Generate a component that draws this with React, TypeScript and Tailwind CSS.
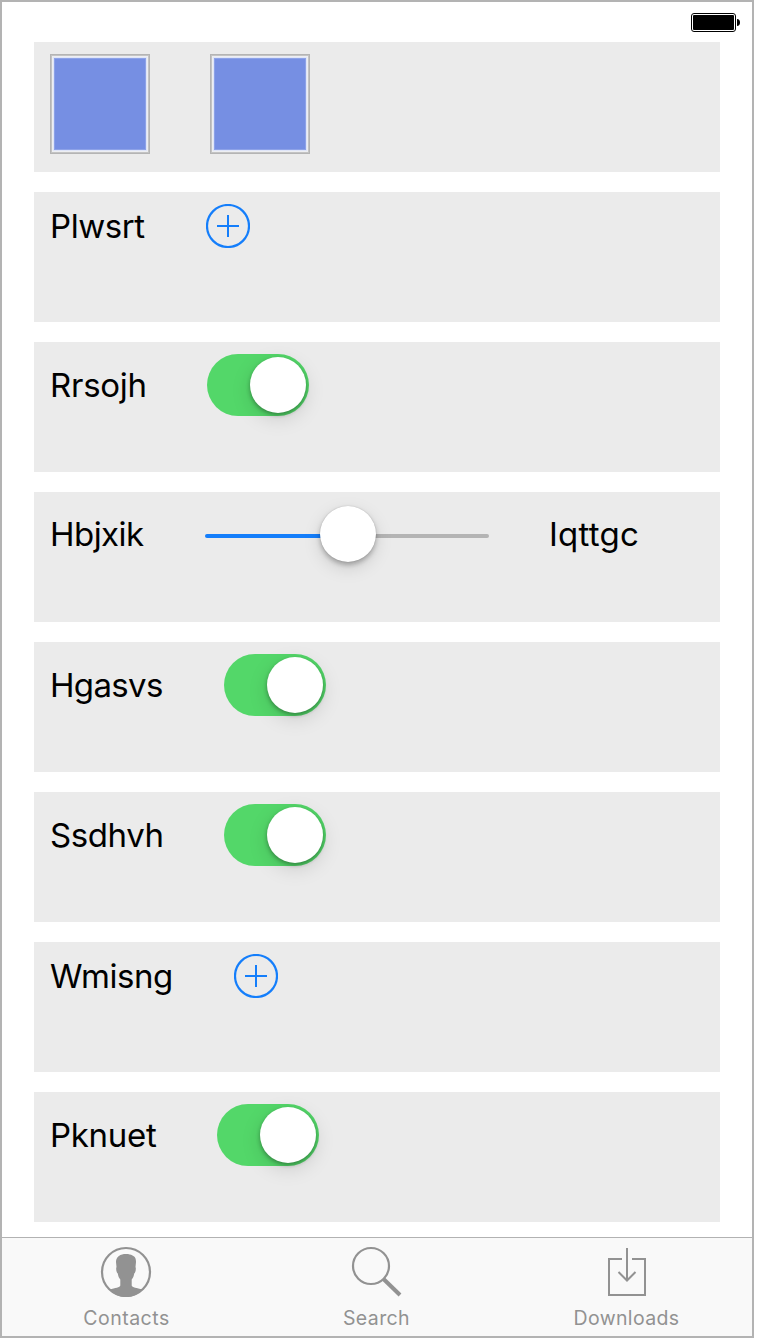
import type { ReactNode } from "react";

function Row({ children }: { children?: ReactNode }) {
  return (
    <div className="flex h-[130px] items-start bg-[#ebebeb] pt-3 pl-4">
      <div className="flex items-center gap-[60px]">{children}</div>
    </div>
  );
}

function Label({ text, className }: { text: string; className: string }) {
  return (
    <span className={`block whitespace-nowrap text-[33px] leading-[44px] text-black ${className}`}>
      {text}
    </span>
  );
}

function Swatch() {
  return (
    <div className="size-[100px] border border-[#b4b4b4] bg-[#768fe3] shadow-[inset_0_0_0_1px_#c3c3c3,inset_0_0_0_2px_#edeef1,inset_0_0_0_3px_#dfe5f8,inset_0_0_0_4px_#8da2e8]" />
  );
}

function AddButton() {
  return (
    <button type="button" className="block size-11">
      <svg viewBox="0 0 44 44" className="size-11" fill="none" stroke="#147efb" strokeWidth="2">
        <circle cx="22" cy="22" r="21" strokeWidth="2.2" />
        <path d="M22 11v22M11 22h22" />
      </svg>
    </button>
  );
}

function Toggle() {
  return (
    <button
      type="button"
      role="switch"
      aria-checked="true"
      className="flex h-[62px] w-[102px] items-center justify-end rounded-full bg-[#53d769] pr-[3px]"
    >
      <span className="block size-14 rounded-full bg-white shadow-[0_6px_20px_rgba(0,0,0,0.13),0_2px_4px_rgba(0,0,0,0.32)]" />
    </button>
  );
}

function Slider() {
  return (
    <div className="relative flex h-[60px] w-[284px] items-center pt-1">
      <div className="h-1 flex-1 rounded-l-full bg-[#147efb]" />
      <div className="h-1 flex-1 rounded-r-full bg-[#b4b4b4]" />
      <div className="absolute top-[2px] left-[115px] size-14 rounded-full bg-white shadow-[0_6px_18px_rgba(0,0,0,0.13),0_3px_5px_rgba(0,0,0,0.26),0_0_1px_rgba(0,0,0,0.25)]" />
    </div>
  );
}

function Tab({ label, className, children }: { label: string; className: string; children?: ReactNode }) {
  return (
    <button type="button" className="flex w-[250px] flex-col items-center pt-[9px] text-[#929292]">
      {children}
      <span className={`mt-[9px] block pr-px text-[19.5px] leading-6 ${className}`}>{label}</span>
    </button>
  );
}

export default function App() {
  return (
    <div className="h-[1340px] w-[760px] bg-white font-['Inter',sans-serif]">
      <div className="flex h-[1338px] w-[754px] flex-col border-2 border-[#b3b3b3] bg-white">
        <div className="flex h-10 shrink-0 justify-end pt-[11px] pr-3">
          <svg viewBox="0 0 49 19" className="h-[19px] w-[49px]">
            <rect x="0.5" y="0.5" width="44" height="18" rx="2.5" fill="none" stroke="#000" />
            <rect x="2" y="2" width="41" height="15" rx="1" fill="#000" />
            <path d="M46 6c2 0 3 1.500 3 3.500s-1 3.500-3 3.500z" fill="#000" />
          </svg>
        </div>
        <main className="flex flex-1 flex-col gap-5 px-8">
          <Row>
            <Swatch />
            <Swatch />
          </Row>
          <Row>
            <Label text="Plwsrt" className="w-24 tracking-[-0.45px]" />
            <AddButton />
          </Row>
          <Row>
            <Label text="Rrsojh" className="w-[97px] tracking-[-0.25px]" />
            <Toggle />
          </Row>
          <Row>
            <Label text="Hbjxik" className="w-[95px] tracking-[-0.55px]" />
            <Slider />
            <Label text="Iqttgc" className="w-[90px] tracking-[0.25px]" />
          </Row>
          <Row>
            <Label text="Hgasvs" className="w-[114px] tracking-[-0.65px]" />
            <Toggle />
          </Row>
          <Row>
            <Label text="Ssdhvh" className="w-[114px] tracking-[-0.4px]" />
            <Toggle />
          </Row>
          <Row>
            <Label text="Wmisng" className="w-[124px] tracking-[-0.45px]" />
            <AddButton />
          </Row>
          <Row>
            <Label text="Pknuet" className="w-[107px] tracking-[-0.3px]" />
            <Toggle />
          </Row>
        </main>
        <nav className="flex h-[99px] shrink-0 border-t border-[#b2b2b2] bg-[#f9f9f9]">
          <Tab label="Contacts" className="tracking-[0.5px]">
            <svg viewBox="1 0 50 50" className="size-[50px] overflow-visible">
              <circle cx="25" cy="25" r="24" fill="none" stroke="currentColor" strokeWidth="2.2" />
              <path
                fill="currentColor"
                d="M25 7c-5.500 0-10 2.500-10 8l.5 5c-.7 1-.3 5.500 1.300 6.500.3 2.500 1.200 4.500 2.500 6v6c-.5 2-5 2.500-10.800 4C12.500 47.500 19 50 25 50s12.500-2.500 16.500-7.500c-5.800-1.500-10.300-2-10.800-4v-6c1.300-1.500 2.200-3.500 2.500-6 1.600-1 2-5.500 1.300-6.500l.5-5c0-4-1-5.500-3.500-6.500C29.500 7.500 28 7 25 7z"
              />
            </svg>
          </Tab>
          <Tab label="Search" className="tracking-[0.4px]">
            <svg viewBox="1 0 50 50" className="size-[50px] overflow-visible" fill="none" stroke="currentColor">
              <circle cx="20" cy="19" r="18" strokeWidth="2.2" />
              <path d="M32.500 32 49 48" strokeWidth="4" />
            </svg>
          </Tab>
          <Tab label="Downloads" className="tracking-[0.35px]">
            <svg viewBox="0 0 50 50" className="size-[50px]" fill="none" stroke="currentColor" strokeWidth="2">
              <path d="M20 12H7v36h36V12H30M25 1v33M16.500 25l8.500 8.500 8.500-8.500" />
            </svg>
          </Tab>
        </nav>
      </div>
    </div>
  );
}
